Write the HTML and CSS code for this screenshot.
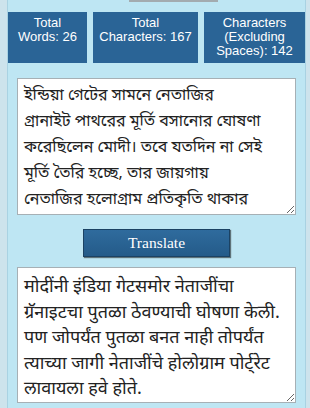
FILE: index.html
```html
<!DOCTYPE html>
<html lang="bn">
<head>
    <meta charset="UTF-8">
    <meta name="viewport" content="width=device-width, initial-scale=1.0">
    <title>Translator</title>
    <link rel="stylesheet" href="styles.css">
</head>
<body>
<div class="translator">
    <div class="top-bar"></div>
    <div class="stats">
        <div class="stat-box">Total<br>Words: 26</div>
        <div class="stat-box">Total<br>Characters: 167</div>
        <div class="stat-box">Characters<br>(Excluding<br>Spaces): 142</div>
    </div>
    <textarea class="text-box source" id="sourceText">ইন্ডিয়া গেটের সামনে নেতাজির
গ্রানাইট পাথরের মূর্তি বসানোর ঘোষণা
করেছিলেন মোদী। তবে যতদিন না সেই
মূর্তি তৈরি হচ্ছে, তার জায়গায়
নেতাজির হলোগ্রাম প্রতিকৃতি থাকার
কথা।</textarea>
    <div class="button-row">
        <button class="translate-button" id="translateButton">Translate</button>
    </div>
    <textarea class="text-box result" id="resultText" lang="mr">मोदींनी इंडिया गेटसमोर नेताजींचा ग्रॅनाइटचा पुतळा ठेवण्याची घोषणा केली. पण जोपर्यंत पुतळा बनत नाही तोपर्यंत त्याच्या जागी नेताजींचे होलोग्राम पोर्ट्रेट लावायला हवे होते.</textarea>
</div>
</body>
</html>
```

FILE: styles.css
```css
body {
    margin: 0;
    background-color: #cde3ec;
    font-family: 'Liberation Sans', Arial, sans-serif;
    overflow: hidden;
}

.translator {
    width: 297px;
    margin-left: 7px;
    border-left: 1px solid #a9d2e2;
    border-right: 1px solid #a9d2e2;
    background-color: #bee6f3;
    padding-bottom: 10px;
}

.top-bar {
    width: 89px;
    height: 2px;
    margin-left: 121px;
    background-color: #a3abaf;
}

.stats {
    display: grid;
    grid-template-columns: 79px 105px 1fr;
    gap: 6px;
    margin-top: 10px;
}

.stat-box {
    background-color: #2a6496;
    color: white;
    text-align: center;
    font-size: 13px;
    line-height: 14px;
    padding: 4px 2px 5px;
}

.text-box {
    display: block;
    box-sizing: border-box;
    width: 279px;
    margin: 15px 9px 0;
    border: 1px solid #a6b0b5;
    background-color: white;
    color: #222;
    overflow: hidden;
    resize: vertical;
}

.source {
    height: 137px;
    padding: 4px 2px 4px 6px;
    font-family: 'Noto Sans Bengali', 'Lohit Bengali', 'Noto Sans', sans-serif;
    font-size: 16px;
    line-height: 26px;
}

.result {
    height: 136px;
    margin-top: 10px;
    padding: 7px 6px 4px;
    font-family: 'Noto Sans Devanagari', 'Lohit Devanagari', 'Noto Sans', sans-serif;
    font-size: 18px;
    line-height: 25.5px;
}

.button-row {
    display: flex;
    justify-content: center;
    margin-top: 14px;
}

.translate-button {
    width: 147px;
    height: 28px;
    padding: 0;
    background: linear-gradient(#2f6b9d, #245b89);
    color: white;
    font-family: 'Liberation Serif', serif;
    font-size: 15.5px;
    border: 1px solid #1b4263;
    border-radius: 0;
    box-shadow: 1px 1px 1px rgba(0, 0, 0, 0.5);
    cursor: pointer;
}
```
